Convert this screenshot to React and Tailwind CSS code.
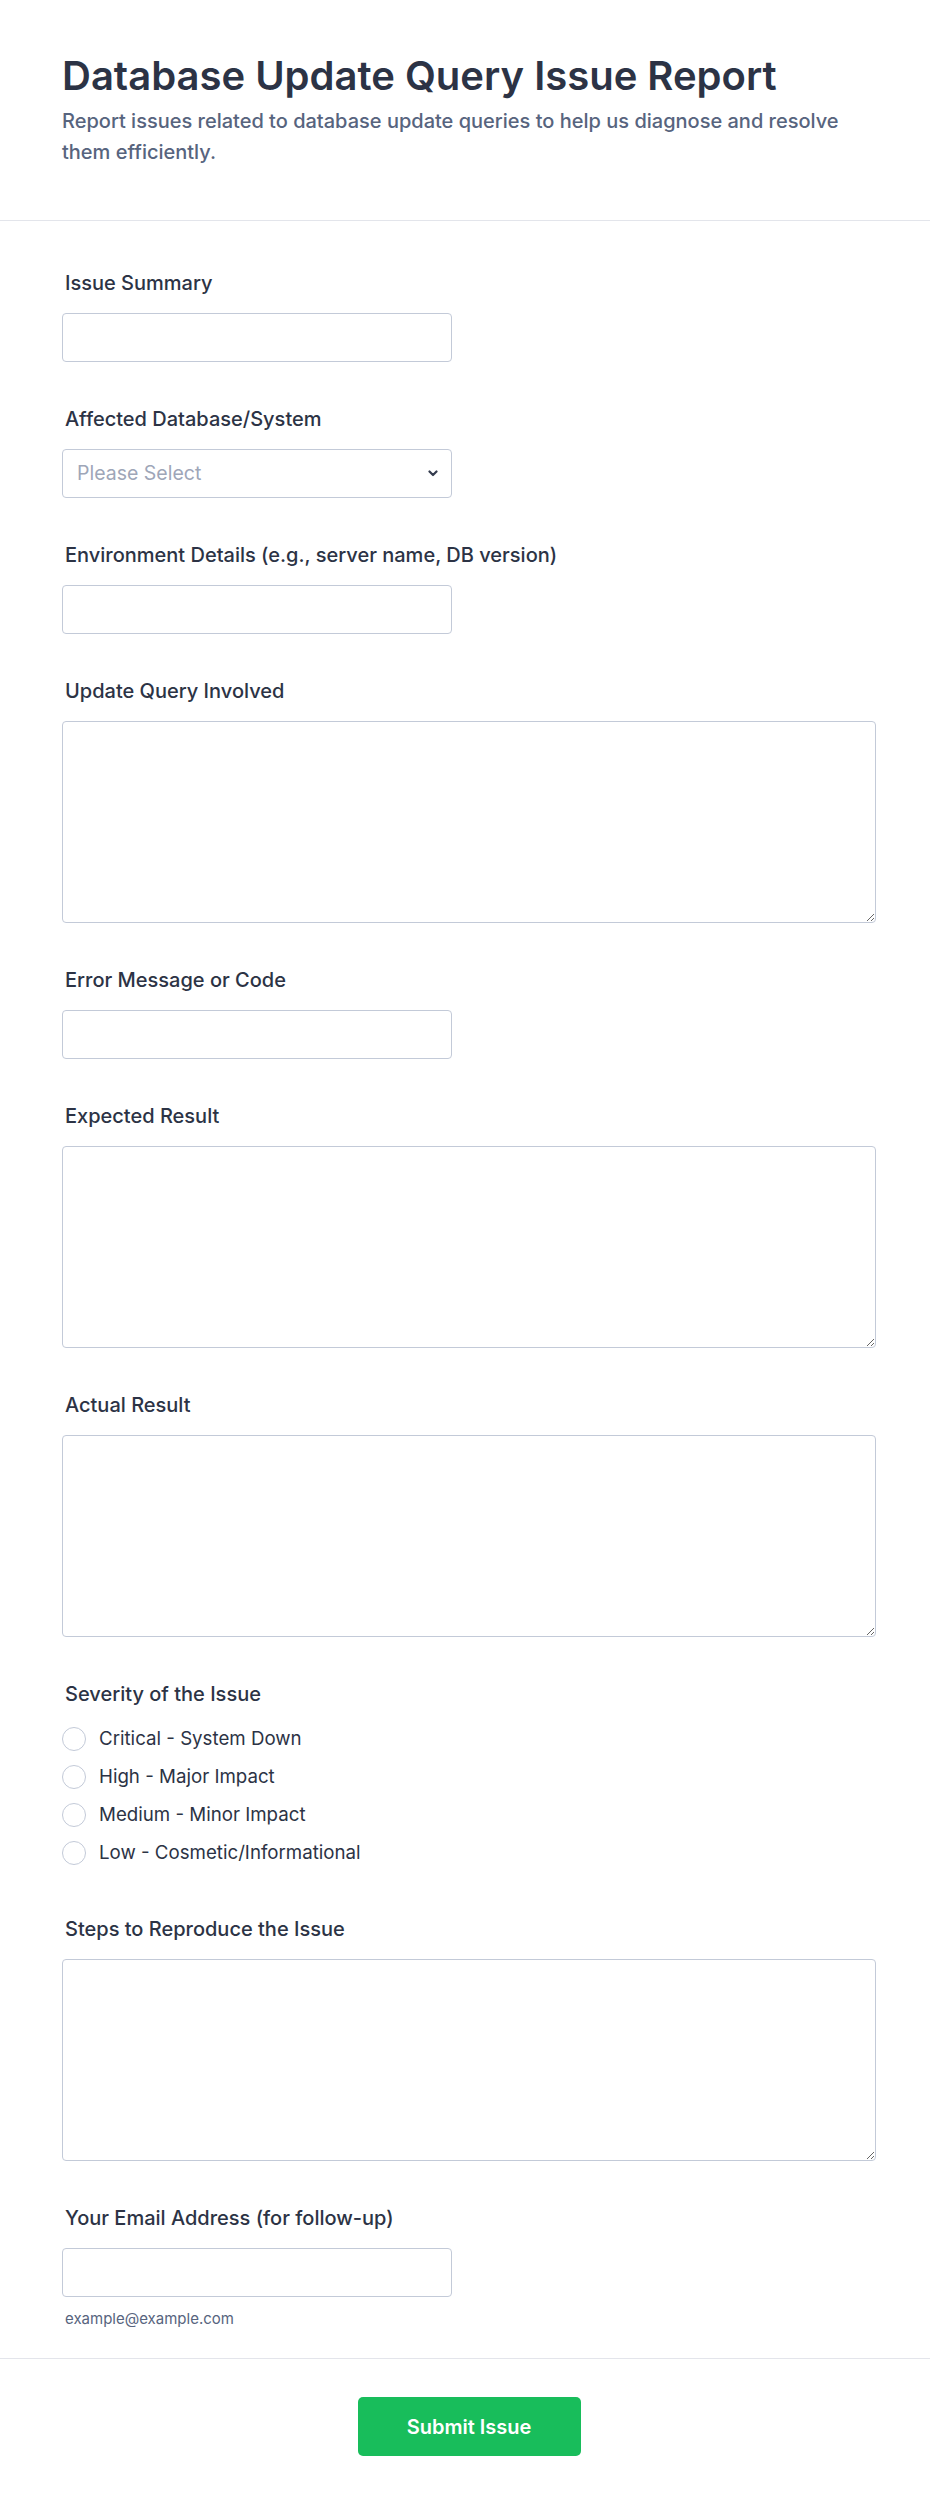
import { useState } from 'react';

const labelCls = 'block pl-[3px] text-[20px] leading-6 font-medium text-[#2c3345]';
const inputCls =
  'block w-[390px] h-[49px] rounded-[4px] border border-[#c3cad8] bg-white px-3 text-[18px] text-[#2c3345] outline-none';
const areaCls =
  'block w-full h-[202px] rounded-[4px] border border-[#c3cad8] bg-white px-3 py-2 text-[18px] text-[#2c3345] outline-none';

function Field({ label, children }) {
  return (
    <div>
      <label className={labelCls}>{label}</label>
      <div className="mt-[18px]">{children}</div>
    </div>
  );
}

const severities = [
  'Critical - System Down',
  'High - Major Impact',
  'Medium - Minor Impact',
  'Low - Cosmetic/Informational',
];

export default function App() {
  const [severity, setSeverity] = useState('');

  return (
    <div className="min-h-[2506px] w-[930px] bg-white font-['Inter',sans-serif] text-[#2c3345]">
      {/* header */}
      <div className="pl-[62px] pr-[54px] pt-[52px] pb-[52px] border-b border-[#e3e5eb]">
        <h1 className="text-[40px] leading-[48px] font-semibold text-[#2c3345]">
          Database Update Query Issue Report
        </h1>
        <p className="mt-[6px] text-[20px] leading-[31px] font-medium text-[#57647e]">
          Report issues related to database update queries to help us diagnose and resolve them efficiently.
        </p>
      </div>

      {/* fields */}
      <div className="pl-[62px] pr-[54px] pt-[50px] flex flex-col gap-[45px]">
        <Field label="Issue Summary">
          <input type="text" className={inputCls} />
        </Field>

        <Field label="Affected Database/System">
          <div className="relative w-[390px]">
            <select
              defaultValue=""
              className="block w-full h-[49px] appearance-none rounded-[4px] border border-[#c3cad8] bg-white pl-[14px] pr-8 text-[19.5px] text-[#9ea6b8] outline-none"
            >
              <option value="" disabled>
                Please Select
              </option>
              <option>MySQL</option>
              <option>PostgreSQL</option>
              <option>Oracle</option>
              <option>SQL Server</option>
            </select>
            <svg
              className="pointer-events-none absolute right-[14px] top-[21px]"
              width="10"
              height="7"
              viewBox="0 0 10 7"
              fill="none"
            >
              <path d="M1.5 1.5 L5 5 L8.5 1.5" stroke="#343c4e" strokeWidth="2.2" strokeLinecap="round" strokeLinejoin="round" />
            </svg>
          </div>
        </Field>

        <Field label="Environment Details (e.g., server name, DB version)">
          <input type="text" className={inputCls} />
        </Field>

        <Field label="Update Query Involved">
          <textarea className={areaCls} />
        </Field>

        <Field label="Error Message or Code">
          <input type="text" className={inputCls} />
        </Field>

        <Field label="Expected Result">
          <textarea className={areaCls} />
        </Field>

        <Field label="Actual Result">
          <textarea className={areaCls} />
        </Field>

        <div>
          <label className={labelCls}>Severity of the Issue</label>
          <div className="mt-[14px] flex flex-col">
            {severities.map((s) => (
              <label key={s} className="flex h-[38px] items-center gap-[13px] cursor-pointer">
                <span
                  onClick={() => setSeverity(s)}
                  className="flex h-6 w-6 items-center justify-center rounded-full border-[1.5px] border-[#c3cad8] bg-white"
                >
                  {severity === s && <span className="h-3 w-3 rounded-full bg-[#2c3345]" />}
                </span>
                <span onClick={() => setSeverity(s)} className="text-[18.7px] text-[#2c3345]">
                  {s}
                </span>
              </label>
            ))}
          </div>
        </div>

        <Field label="Steps to Reproduce the Issue">
          <textarea className={areaCls} />
        </Field>

        <div>
          <Field label="Your Email Address (for follow-up)">
            <input type="email" className={inputCls} />
          </Field>
          <p className="mt-[11px] pl-[3px] text-[15px] leading-[22px] text-[#57647e]">example@example.com</p>
        </div>
      </div>

      {/* footer */}
      <div className="mt-[28px] border-t border-[#e3e5eb] pt-[38px] pb-[50px] pl-[62px] pr-[54px] flex justify-center">
        <button className="w-[223px] h-[59px] rounded-[5px] bg-[#18bd5b] text-[20px] font-semibold text-white">
          Submit Issue
        </button>
      </div>
    </div>
  );
}
